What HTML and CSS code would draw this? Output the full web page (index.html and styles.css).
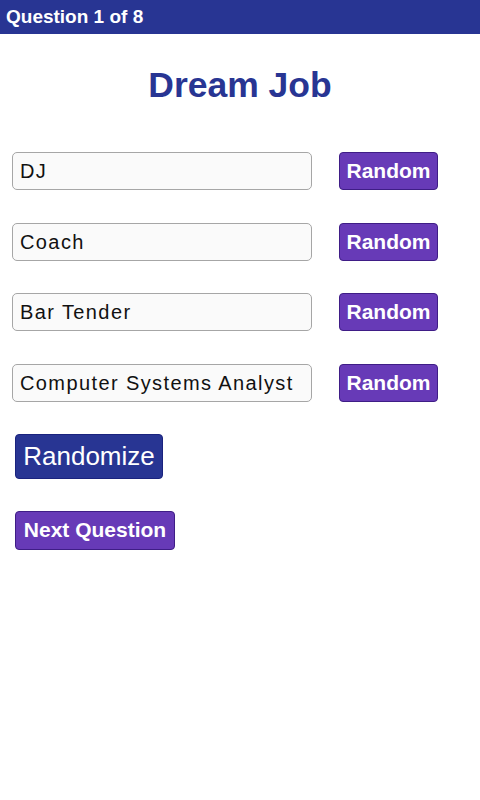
FILE: index.html
```html
<!DOCTYPE html>
<html>
<head>
<meta charset="utf-8">
<link rel="stylesheet" href="styles.css">
</head>
<body>
<header class="topbar">Question 1 of 8</header>
<h1 class="title">Dream Job</h1>
<main class="content">
  <div class="row">
    <input class="field" type="text" value="DJ">
    <button class="btn-random">Random</button>
  </div>
  <div class="row">
    <input class="field" type="text" value="Coach">
    <button class="btn-random">Random</button>
  </div>
  <div class="row">
    <input class="field" type="text" value="Bar Tender">
    <button class="btn-random">Random</button>
  </div>
  <div class="row">
    <input class="field" type="text" value="Computer Systems Analyst">
    <button class="btn-random">Random</button>
  </div>
  <div class="actions">
    <button class="btn-randomize">Randomize</button>
    <button class="btn-next">Next Question</button>
  </div>
</main>
</body>
</html>
```
FILE: styles.css
```css
* { box-sizing: border-box; }
html, body {
  margin: 0;
  padding: 0;
  background: #ffffff;
  font-family: "Liberation Sans", Arial, sans-serif;
}
.topbar {
  height: 34px;
  background: #283593;
  color: #ffffff;
  font-weight: bold;
  font-size: 19px;
  line-height: 34px;
  padding-left: 6px;
}
.title {
  margin: 31px 0 0 0;
  height: 40px;
  font-size: 35.5px;
  line-height: 40px;
  font-weight: bold;
  color: #283593;
  text-align: center;
}
.content {
  padding: 47px 0 0 12px;
  display: flex;
  flex-direction: column;
  gap: 32.5px;
}
.row {
  display: flex;
  align-items: center;
  gap: 27px;
  height: 38px;
}
.field {
  width: 300px;
  height: 38px;
  border: 1px solid #a6a6a6;
  border-radius: 5px;
  background: #fafafa;
  padding: 1px 0 0 7px;
  font-family: "Liberation Sans", Arial, sans-serif;
  font-size: 20px;
  letter-spacing: 1.4px;
  color: #111111;
  outline: none;
}
.btn-random {
  width: 99px;
  height: 38px;
  background: #673ab7;
  border: 1px solid #3f1d86;
  border-radius: 4px;
  color: #ffffff;
  font-family: "Liberation Sans", Arial, sans-serif;
  font-weight: bold;
  font-size: 21px;
  padding: 0;
}
.actions {
  display: flex;
  flex-direction: column;
  align-items: flex-start;
  gap: 32px;
  padding-left: 3px;
  margin-top: -0.5px;
}
.btn-randomize {
  width: 148px;
  height: 45px;
  background: #283593;
  border: 1px solid #1a237e;
  border-radius: 4px;
  color: #ffffff;
  font-family: "Liberation Sans", Arial, sans-serif;
  font-size: 26px;
  padding: 0;
}
.btn-next {
  width: 160px;
  height: 39px;
  background: #673ab7;
  border: 1px solid #3f1d86;
  border-radius: 4px;
  color: #ffffff;
  font-family: "Liberation Sans", Arial, sans-serif;
  font-weight: bold;
  font-size: 21px;
  padding: 0;
}
```
